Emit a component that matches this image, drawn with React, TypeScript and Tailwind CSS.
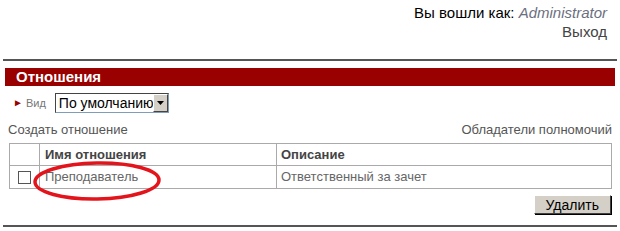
// Страница "Отношения": шапка пользователя, красная плашка раздела, таблица.

const font = "font-['Liberation_Sans',Arial,sans-serif]";

export default function App() {
  return (
    <div className={`${font} h-[231px] w-[620px] bg-white`}>
      {/* пользователь */}
      <div className="flex flex-col items-end pr-[13px] pt-[3px] text-[15px] leading-[19px]">
        <div className="text-black">
          Вы вошли как: <span className="italic text-[#6b6f80]">Administrator</span>
        </div>
        <a className="text-[#444]">Выход</a>
      </div>

      <div className="mx-[3px] mt-[18px] h-[2px] bg-[#555]" />

      {/* раздел */}
      <div className="mx-[5px] mt-[7px] h-[18px] bg-[#990000] pl-[11px] text-[15px] font-bold leading-[18px] text-white">
        Отношения
      </div>

      <div className="mt-[7px] flex items-center pl-[13px]">
        <span className="text-[10px] leading-none text-[#990000]">►</span>
        <span className="ml-[3px] text-[11px] text-[#777]">Вид</span>
        <div className="ml-[9px] flex h-[20px] w-[114px] items-stretch border border-[#7f9db9] border-l-[#444] border-t-[#444] bg-white">
          <span className="flex-1 overflow-hidden whitespace-nowrap pl-[3px] text-[14px] leading-[18px] text-black">
            По умолчанию
          </span>
          <span className="flex w-[15px] shrink-0 items-center justify-center border border-[#fff] border-b-[#444] border-r-[#444] bg-[#d4d0c8]">
            <svg width="7" height="4" viewBox="0 0 7 4">
              <path d="M0 0H7L3.5 4Z" fill="#000" />
            </svg>
          </span>
        </div>
      </div>

      <div className="mt-[9px] flex justify-between px-[8px] text-[13px] leading-[16px] text-[#555]">
        <a>Создать отношение</a>
        <a>Обладатели полномочий</a>
      </div>

      <div className="relative mx-[9px] mt-[5px]">
        <table className="w-[603px] border-collapse text-[13px] text-[#444]">
          <thead>
            <tr className="h-[22px]">
              <th className="w-[30px] border border-[#aaa]" />
              <th className="w-[237px] border border-[#aaa] pl-[5px] text-left font-bold">Имя отношения</th>
              <th className="border border-[#aaa] pl-[4px] text-left font-bold">Описание</th>
            </tr>
          </thead>
          <tbody>
            <tr className="h-[23px]">
              <td className="border border-[#aaa] text-center">
                <span className="inline-block h-[13px] w-[13px] border border-[#555] bg-white align-middle" />
              </td>
              <td className="border border-[#aaa] pl-[5px] text-[#666]">Преподаватель</td>
              <td className="border border-[#aaa] pl-[4px] text-[#666]">Ответственный за зачет</td>
            </tr>
          </tbody>
        </table>
        {/* пометка от руки */}
        <svg className="absolute left-[22px] top-[17px]" width="132" height="42" viewBox="0 0 132 42">
          <ellipse cx="66" cy="21" rx="62" ry="18" fill="none" stroke="#e3141b" strokeWidth="3.5" transform="rotate(-1 66 21)" />
        </svg>
      </div>

      <div className="mt-[6px] flex justify-end pr-[9px]">
        <button className="h-[19px] border border-[#fff] border-b-[#404040] border-r-[#404040] bg-[#d4d0c8] px-[11px] text-[14px] leading-[16px] text-black shadow-[1px_1px_0_#000]">
          Удалить
        </button>
      </div>

      <div className="mx-[3px] mt-[11px] h-[2px] bg-[#555]" />
    </div>
  );
}
